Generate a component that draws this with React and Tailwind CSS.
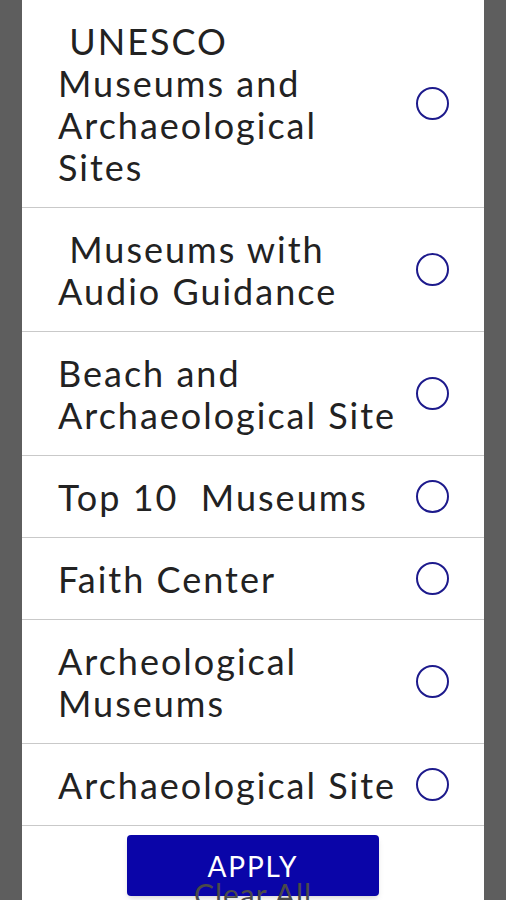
import React from "react";

const options = [
  { label: "\u00a0UNESCO Museums and Archaeological Sites" },
  { label: "\u00a0Museums with Audio Guidance" },
  { label: "Beach and Archaeological Site" },
  { label: "Top 10\u00a0 Museums" },
  { label: "Faith Center" },
  { label: "Archeological Museums" },
  { label: "Archaeological Site" },
];

const Radio = () => (
  <span className="w-[33px] h-[33px] rounded-full border-2 border-[#1d1a8c] shrink-0" />
);

const App = () => {
  return (
    <div className="w-[506px] h-[900px] bg-[#5e5e5e] overflow-hidden" style={{ fontFamily: "Lato, 'Noto Sans', sans-serif" }}>
      <div className="mx-[22px] h-full bg-white overflow-hidden">
        {options.map((opt, i) => (
          <div
            key={i}
            className="flex items-center justify-between border-b border-[#c9c9c9] pl-[36px] pr-[35px] py-[19.5px]"
          >
            <span className="w-[341px] text-[36px] leading-[42px] text-[#222] tracking-[2px]">{opt.label}</span>
            <Radio />
          </div>
        ))}
        <div className="flex flex-col items-center pt-[9px]">
          <button className="w-[252px] h-[61px] bg-[#0a05a8] rounded-[4px] text-white text-[28px] leading-none tracking-[1.8px] shadow-md">
            APPLY
          </button>
          <span className="relative -mt-[19px] text-[30px] leading-[34px] tracking-[1px] text-[#4a4a4a]">Clear All</span>
        </div>
      </div>
    </div>
  );
};

export default App;
